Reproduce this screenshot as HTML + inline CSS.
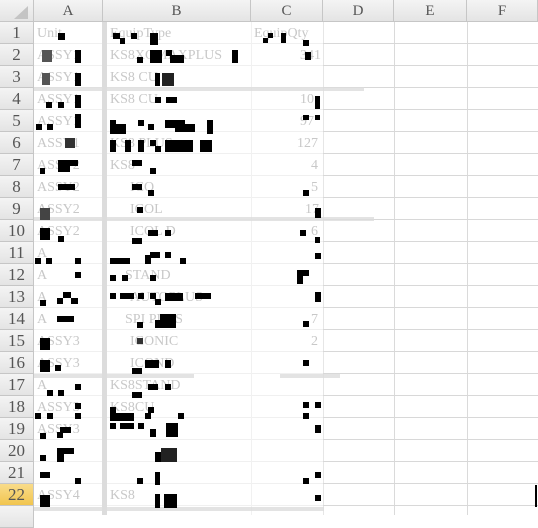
<!DOCTYPE html>
<html><head><meta charset="utf-8"><style>
*{margin:0;padding:0;box-sizing:border-box}
body{width:538px;height:515px;overflow:hidden;background:#fff;position:relative;font-family:"Liberation Serif",serif}
.h{position:absolute;background:linear-gradient(#f4f4f4,#e4e4e4);color:#555;font-size:15px;text-align:center;border-right:1px solid #c6c6c6;border-bottom:1px solid #c6c6c6}
.g{position:absolute;background:#dadada}
.gf{position:absolute;background:#f1f1f1}
.t{position:absolute;color:#c8c8c8;font-size:14px;white-space:nowrap}
.b{position:absolute;background:#000}
.bar{position:absolute;background:#dcdcdc}
</style></head><body>
<div class="h" style="left:0;top:0;width:34px;height:22px"></div>
<div style="position:absolute;left:14px;top:6px;width:0;height:0;border-left:14px solid transparent;border-bottom:13px solid #c4c4c4"></div>
<div class="h" style="left:34px;top:0;width:69px;height:22px;line-height:22px">A</div>
<div class="h" style="left:103px;top:0;width:148px;height:22px;line-height:22px">B</div>
<div class="h" style="left:251px;top:0;width:72px;height:22px;line-height:22px">C</div>
<div class="h" style="left:323px;top:0;width:71px;height:22px;line-height:22px">D</div>
<div class="h" style="left:394px;top:0;width:73px;height:22px;line-height:22px">E</div>
<div class="h" style="left:467px;top:0;width:71px;height:22px;line-height:22px">F</div>

<div id="rows"></div>
<div class="h" style="left:0;top:22px;width:34px;height:22px;line-height:22px;font-size:17px">1</div>
<div class="h" style="left:0;top:44px;width:34px;height:22px;line-height:22px;font-size:17px">2</div>
<div class="h" style="left:0;top:66px;width:34px;height:22px;line-height:22px;font-size:17px">3</div>
<div class="h" style="left:0;top:88px;width:34px;height:22px;line-height:22px;font-size:17px">4</div>
<div class="h" style="left:0;top:110px;width:34px;height:22px;line-height:22px;font-size:17px">5</div>
<div class="h" style="left:0;top:132px;width:34px;height:22px;line-height:22px;font-size:17px">6</div>
<div class="h" style="left:0;top:154px;width:34px;height:22px;line-height:22px;font-size:17px">7</div>
<div class="h" style="left:0;top:176px;width:34px;height:22px;line-height:22px;font-size:17px">8</div>
<div class="h" style="left:0;top:198px;width:34px;height:22px;line-height:22px;font-size:17px">9</div>
<div class="h" style="left:0;top:220px;width:34px;height:22px;line-height:22px;font-size:17px">10</div>
<div class="h" style="left:0;top:242px;width:34px;height:22px;line-height:22px;font-size:17px">11</div>
<div class="h" style="left:0;top:264px;width:34px;height:22px;line-height:22px;font-size:17px">12</div>
<div class="h" style="left:0;top:286px;width:34px;height:22px;line-height:22px;font-size:17px">13</div>
<div class="h" style="left:0;top:308px;width:34px;height:22px;line-height:22px;font-size:17px">14</div>
<div class="h" style="left:0;top:330px;width:34px;height:22px;line-height:22px;font-size:17px">15</div>
<div class="h" style="left:0;top:352px;width:34px;height:22px;line-height:22px;font-size:17px">16</div>
<div class="h" style="left:0;top:374px;width:34px;height:22px;line-height:22px;font-size:17px">17</div>
<div class="h" style="left:0;top:396px;width:34px;height:22px;line-height:22px;font-size:17px">18</div>
<div class="h" style="left:0;top:418px;width:34px;height:22px;line-height:22px;font-size:17px">19</div>
<div class="h" style="left:0;top:440px;width:34px;height:22px;line-height:22px;font-size:17px">20</div>
<div class="h" style="left:0;top:462px;width:34px;height:22px;line-height:22px;font-size:17px">21</div>
<div class="h" style="left:0;top:484px;width:34px;height:22px;line-height:22px;font-size:17px;background:linear-gradient(#f9dc8a,#f1c54f)">22</div>
<div class="h" style="left:0;top:506px;width:34px;height:22px"></div>

<!-- gridlines D-F -->
<div class="g" style="left:394px;top:22px;width:1px;height:493px"></div>
<div class="g" style="left:467px;top:22px;width:1px;height:493px"></div>
<div class="g" style="left:323px;top:22px;width:1px;height:493px;background:#e6e6e6"></div>
<div style="position:absolute;left:323px;top:22px;width:215px;height:493px;background:repeating-linear-gradient(to bottom,transparent 0,transparent 21px,#d8d8d8 21px,#d8d8d8 22px)"></div>
<div style="position:absolute;left:34px;top:22px;width:289px;height:493px;background:repeating-linear-gradient(to bottom,transparent 0,transparent 21px,#f0f0f0 21px,#f0f0f0 22px)"></div>
<div class="gf" style="left:251px;top:22px;width:1px;height:493px"></div>

<!-- blurred bars -->
<div class="bar" style="left:102px;top:22px;width:5px;height:493px"></div>
<div class="bar" style="left:34px;top:87px;width:330px;height:4px;opacity:.8"></div>
<div class="bar" style="left:34px;top:217px;width:340px;height:4px;opacity:.8"></div>
<div class="bar" style="left:34px;top:374px;width:160px;height:4px;opacity:.8"></div>
<div class="bar" style="left:280px;top:374px;width:60px;height:4px;opacity:.8"></div>
<div class="bar" style="left:34px;top:507px;width:290px;height:4px;opacity:.8"></div>

<!-- faint text -->
<div class="t" style="left:37px;top:26px">Unit</div><div class="t" style="left:110px;top:26px">EquipType</div><div class="t" style="left:254px;top:26px">EquipQty</div>
<div class="t" style="left:37px;top:48px">ASSY1</div><div class="t" style="left:110px;top:48px">KS8XOMAXPLUS</div><div class="t" style="left:300px;top:48px">341</div>
<div class="t" style="left:37px;top:70px">ASSY1</div><div class="t" style="left:110px;top:70px">KS8 CU</div>
<div class="t" style="left:37px;top:92px">ASSY1</div><div class="t" style="left:110px;top:92px">KS8 CU</div><div class="t" style="left:300px;top:92px">10</div>
<div class="t" style="left:37px;top:114px">ASSY1</div><div class="t" style="left:300px;top:114px">97</div>
<div class="t" style="left:37px;top:136px">ASSY1</div><div class="t" style="left:110px;top:136px">KS8 PLUS</div><div class="t" style="left:297px;top:136px">127</div>
<div class="t" style="left:37px;top:158px">ASSY2</div><div class="t" style="left:110px;top:158px">KS8</div><div class="t" style="left:311px;top:158px">4</div>
<div class="t" style="left:37px;top:180px">ASSY2</div><div class="t" style="left:130px;top:180px">ICO</div><div class="t" style="left:311px;top:180px">5</div>
<div class="t" style="left:37px;top:202px">ASSY2</div><div class="t" style="left:130px;top:202px">ICOL</div><div class="t" style="left:305px;top:202px">17</div>
<div class="t" style="left:37px;top:224px">ASSY2</div><div class="t" style="left:130px;top:224px">ICOL D</div><div class="t" style="left:311px;top:224px">6</div>
<div class="t" style="left:37px;top:246px">A</div>
<div class="t" style="left:37px;top:268px">A</div><div class="t" style="left:125px;top:268px">STAND</div>
<div class="t" style="left:37px;top:290px">A</div><div class="t" style="left:130px;top:290px">AUTOPLUS</div>
<div class="t" style="left:37px;top:312px">A</div><div class="t" style="left:125px;top:312px">SPI PLUS</div><div class="t" style="left:311px;top:312px">7</div>
<div class="t" style="left:37px;top:334px">ASSY3</div><div class="t" style="left:130px;top:334px">ICONIC</div><div class="t" style="left:311px;top:334px">2</div>
<div class="t" style="left:37px;top:356px">ASSY3</div><div class="t" style="left:130px;top:356px">ICOND</div>
<div class="t" style="left:37px;top:378px">A</div><div class="t" style="left:110px;top:378px">KS8STAND</div>
<div class="t" style="left:37px;top:400px">ASSY3</div><div class="t" style="left:110px;top:400px">KS8CU</div>
<div class="t" style="left:37px;top:422px">ASSY3</div>
<div class="t" style="left:37px;top:488px">ASSY4</div><div class="t" style="left:110px;top:488px">KS8</div>

<!-- noise blocks -->
<div class="b" style="left:58px;top:33px;width:7px;height:7px"></div>
<div class="b" style="left:113px;top:33px;width:7px;height:6px"></div><div class="b" style="left:120px;top:38px;width:5px;height:6px"></div><div class="b" style="left:131px;top:33px;width:6px;height:6px"></div><div class="b" style="left:150px;top:33px;width:8px;height:12px"></div>
<div class="b" style="left:263px;top:38px;width:5px;height:5px"></div><div class="b" style="left:268px;top:33px;width:5px;height:5px"></div><div class="b" style="left:281px;top:33px;width:5px;height:10px"></div><div class="b" style="left:303px;top:40px;width:6px;height:6px"></div>

<div class="b" style="left:42px;top:50px;width:10px;height:12px;background:#555"></div><div class="b" style="left:75px;top:50px;width:6px;height:13px"></div>
<div class="b" style="left:137px;top:57px;width:6px;height:6px"></div><div class="b" style="left:150px;top:50px;width:12px;height:13px"></div><div class="b" style="left:166px;top:50px;width:6px;height:6px"></div><div class="b" style="left:170px;top:55px;width:14px;height:8px"></div><div class="b" style="left:232px;top:50px;width:6px;height:13px"></div>
<div class="b" style="left:305px;top:52px;width:6px;height:8px"></div>

<div class="b" style="left:42px;top:73px;width:8px;height:12px;background:#555"></div><div class="b" style="left:75px;top:73px;width:6px;height:13px"></div>
<div class="b" style="left:155px;top:73px;width:5px;height:13px"></div><div class="b" style="left:162px;top:73px;width:12px;height:13px;background:#222"></div>

<div class="b" style="left:46px;top:102px;width:6px;height:6px"></div><div class="b" style="left:58px;top:102px;width:6px;height:6px"></div><div class="b" style="left:75px;top:95px;width:6px;height:13px"></div>
<div class="b" style="left:155px;top:97px;width:6px;height:6px"></div><div class="b" style="left:166px;top:97px;width:11px;height:6px"></div><div class="b" style="left:315px;top:96px;width:5px;height:13px"></div>

<div class="b" style="left:36px;top:124px;width:6px;height:6px"></div><div class="b" style="left:47px;top:124px;width:6px;height:6px"></div><div class="b" style="left:75px;top:114px;width:6px;height:14px"></div>
<div class="b" style="left:110px;top:120px;width:6px;height:14px"></div><div class="b" style="left:116px;top:124px;width:10px;height:10px"></div><div class="b" style="left:138px;top:120px;width:6px;height:6px"></div><div class="b" style="left:148px;top:124px;width:6px;height:6px"></div><div class="b" style="left:165px;top:120px;width:20px;height:8px"></div><div class="b" style="left:175px;top:124px;width:20px;height:8px"></div><div class="b" style="left:207px;top:120px;width:6px;height:14px"></div>
<div class="b" style="left:303px;top:115px;width:6px;height:5px"></div><div class="b" style="left:315px;top:115px;width:5px;height:5px"></div>

<div class="b" style="left:65px;top:138px;width:10px;height:10px;background:#333"></div>
<div class="b" style="left:110px;top:140px;width:6px;height:12px"></div><div class="b" style="left:125px;top:140px;width:6px;height:12px"></div><div class="b" style="left:138px;top:140px;width:6px;height:12px"></div><div class="b" style="left:150px;top:140px;width:6px;height:6px"></div><div class="b" style="left:155px;top:146px;width:6px;height:6px"></div><div class="b" style="left:165px;top:140px;width:28px;height:12px"></div><div class="b" style="left:200px;top:140px;width:12px;height:12px"></div>

<div class="b" style="left:40px;top:168px;width:5px;height:6px"></div><div class="b" style="left:58px;top:160px;width:12px;height:12px"></div><div class="b" style="left:70px;top:160px;width:8px;height:6px"></div>
<div class="b" style="left:132px;top:160px;width:10px;height:6px"></div><div class="b" style="left:150px;top:168px;width:6px;height:6px"></div>

<div class="b" style="left:58px;top:184px;width:17px;height:6px"></div>
<div class="b" style="left:132px;top:184px;width:10px;height:6px"></div><div class="b" style="left:148px;top:190px;width:6px;height:6px"></div><div class="b" style="left:303px;top:190px;width:6px;height:6px"></div>

<div class="b" style="left:40px;top:208px;width:10px;height:12px;background:#444"></div><div class="b" style="left:137px;top:207px;width:6px;height:6px"></div><div class="b" style="left:315px;top:208px;width:6px;height:10px"></div>

<div class="b" style="left:40px;top:228px;width:10px;height:12px"></div><div class="b" style="left:58px;top:236px;width:6px;height:6px"></div>
<div class="b" style="left:132px;top:238px;width:10px;height:6px"></div><div class="b" style="left:148px;top:230px;width:10px;height:6px"></div><div class="b" style="left:165px;top:230px;width:6px;height:6px"></div>
<div class="b" style="left:300px;top:230px;width:6px;height:6px"></div><div class="b" style="left:315px;top:237px;width:5px;height:6px"></div>

<div class="b" style="left:35px;top:258px;width:6px;height:6px"></div><div class="b" style="left:46px;top:258px;width:6px;height:6px"></div><div class="b" style="left:75px;top:258px;width:6px;height:6px"></div>
<div class="b" style="left:110px;top:258px;width:20px;height:6px"></div><div class="b" style="left:145px;top:255px;width:6px;height:9px"></div><div class="b" style="left:150px;top:252px;width:10px;height:6px"></div><div class="b" style="left:165px;top:252px;width:6px;height:6px"></div><div class="b" style="left:180px;top:258px;width:6px;height:6px"></div>
<div class="b" style="left:315px;top:253px;width:6px;height:6px"></div>

<div class="b" style="left:75px;top:272px;width:6px;height:6px"></div>
<div class="b" style="left:110px;top:275px;width:6px;height:6px"></div><div class="b" style="left:122px;top:275px;width:6px;height:6px"></div><div class="b" style="left:150px;top:275px;width:6px;height:6px"></div>
<div class="b" style="left:297px;top:270px;width:12px;height:6px"></div><div class="b" style="left:297px;top:276px;width:6px;height:8px"></div>

<div class="b" style="left:40px;top:300px;width:6px;height:6px"></div><div class="b" style="left:57px;top:298px;width:6px;height:6px"></div><div class="b" style="left:63px;top:292px;width:8px;height:6px"></div><div class="b" style="left:71px;top:298px;width:7px;height:6px"></div>
<div class="b" style="left:110px;top:293px;width:6px;height:6px"></div><div class="b" style="left:120px;top:293px;width:14px;height:6px"></div><div class="b" style="left:138px;top:293px;width:6px;height:6px"></div><div class="b" style="left:150px;top:293px;width:6px;height:6px"></div><div class="b" style="left:155px;top:299px;width:6px;height:6px"></div><div class="b" style="left:165px;top:293px;width:18px;height:8px"></div><div class="b" style="left:195px;top:293px;width:16px;height:6px"></div>
<div class="b" style="left:315px;top:292px;width:6px;height:10px"></div>

<div class="b" style="left:57px;top:316px;width:17px;height:6px"></div>
<div class="b" style="left:137px;top:322px;width:6px;height:6px"></div><div class="b" style="left:155px;top:320px;width:6px;height:8px"></div><div class="b" style="left:160px;top:314px;width:16px;height:14px"></div><div class="b" style="left:303px;top:321px;width:6px;height:6px"></div>

<div class="b" style="left:40px;top:338px;width:10px;height:12px"></div><div class="b" style="left:137px;top:338px;width:6px;height:6px;background:#333"></div>

<div class="b" style="left:40px;top:360px;width:10px;height:12px"></div><div class="b" style="left:55px;top:365px;width:6px;height:6px"></div>
<div class="b" style="left:132px;top:368px;width:10px;height:6px"></div><div class="b" style="left:145px;top:360px;width:14px;height:8px"></div><div class="b" style="left:165px;top:360px;width:6px;height:8px"></div><div class="b" style="left:303px;top:360px;width:6px;height:6px"></div>

<div class="b" style="left:47px;top:390px;width:6px;height:6px"></div><div class="b" style="left:58px;top:390px;width:6px;height:6px"></div><div class="b" style="left:75px;top:384px;width:6px;height:6px"></div>
<div class="b" style="left:132px;top:392px;width:10px;height:6px"></div><div class="b" style="left:148px;top:384px;width:10px;height:6px"></div><div class="b" style="left:165px;top:384px;width:6px;height:6px"></div>

<div class="b" style="left:35px;top:413px;width:6px;height:6px"></div><div class="b" style="left:47px;top:413px;width:6px;height:6px"></div><div class="b" style="left:75px;top:403px;width:6px;height:6px"></div><div class="b" style="left:75px;top:413px;width:6px;height:6px"></div>
<div class="b" style="left:110px;top:407px;width:6px;height:14px"></div><div class="b" style="left:116px;top:413px;width:18px;height:8px"></div><div class="b" style="left:148px;top:407px;width:6px;height:6px"></div><div class="b" style="left:145px;top:413px;width:6px;height:6px"></div><div class="b" style="left:178px;top:413px;width:6px;height:6px"></div>
<div class="b" style="left:303px;top:402px;width:6px;height:6px"></div><div class="b" style="left:315px;top:402px;width:6px;height:6px"></div><div class="b" style="left:303px;top:413px;width:6px;height:6px"></div>

<div class="b" style="left:40px;top:433px;width:6px;height:6px"></div><div class="b" style="left:60px;top:427px;width:11px;height:6px"></div><div class="b" style="left:57px;top:432px;width:6px;height:6px"></div>
<div class="b" style="left:110px;top:423px;width:6px;height:6px"></div><div class="b" style="left:120px;top:423px;width:14px;height:6px"></div><div class="b" style="left:138px;top:423px;width:6px;height:6px"></div><div class="b" style="left:150px;top:429px;width:6px;height:8px"></div><div class="b" style="left:166px;top:423px;width:12px;height:14px"></div>
<div class="b" style="left:315px;top:425px;width:6px;height:8px"></div>

<div class="b" style="left:40px;top:455px;width:6px;height:6px"></div><div class="b" style="left:57px;top:448px;width:7px;height:14px"></div><div class="b" style="left:64px;top:448px;width:10px;height:6px"></div>
<div class="b" style="left:155px;top:452px;width:6px;height:10px"></div><div class="b" style="left:161px;top:448px;width:16px;height:14px;background:#222"></div>

<div class="b" style="left:40px;top:472px;width:10px;height:6px"></div><div class="b" style="left:75px;top:478px;width:6px;height:6px"></div>
<div class="b" style="left:137px;top:478px;width:6px;height:6px"></div><div class="b" style="left:155px;top:472px;width:5px;height:13px"></div>
<div class="b" style="left:303px;top:478px;width:6px;height:6px"></div><div class="b" style="left:315px;top:472px;width:6px;height:6px"></div>

<div class="b" style="left:40px;top:495px;width:10px;height:12px"></div><div class="b" style="left:155px;top:494px;width:5px;height:14px"></div><div class="b" style="left:164px;top:494px;width:13px;height:14px"></div><div class="b" style="left:315px;top:495px;width:6px;height:6px"></div>

<div class="b" style="left:535px;top:485px;width:2px;height:22px"></div>
</body></html>
